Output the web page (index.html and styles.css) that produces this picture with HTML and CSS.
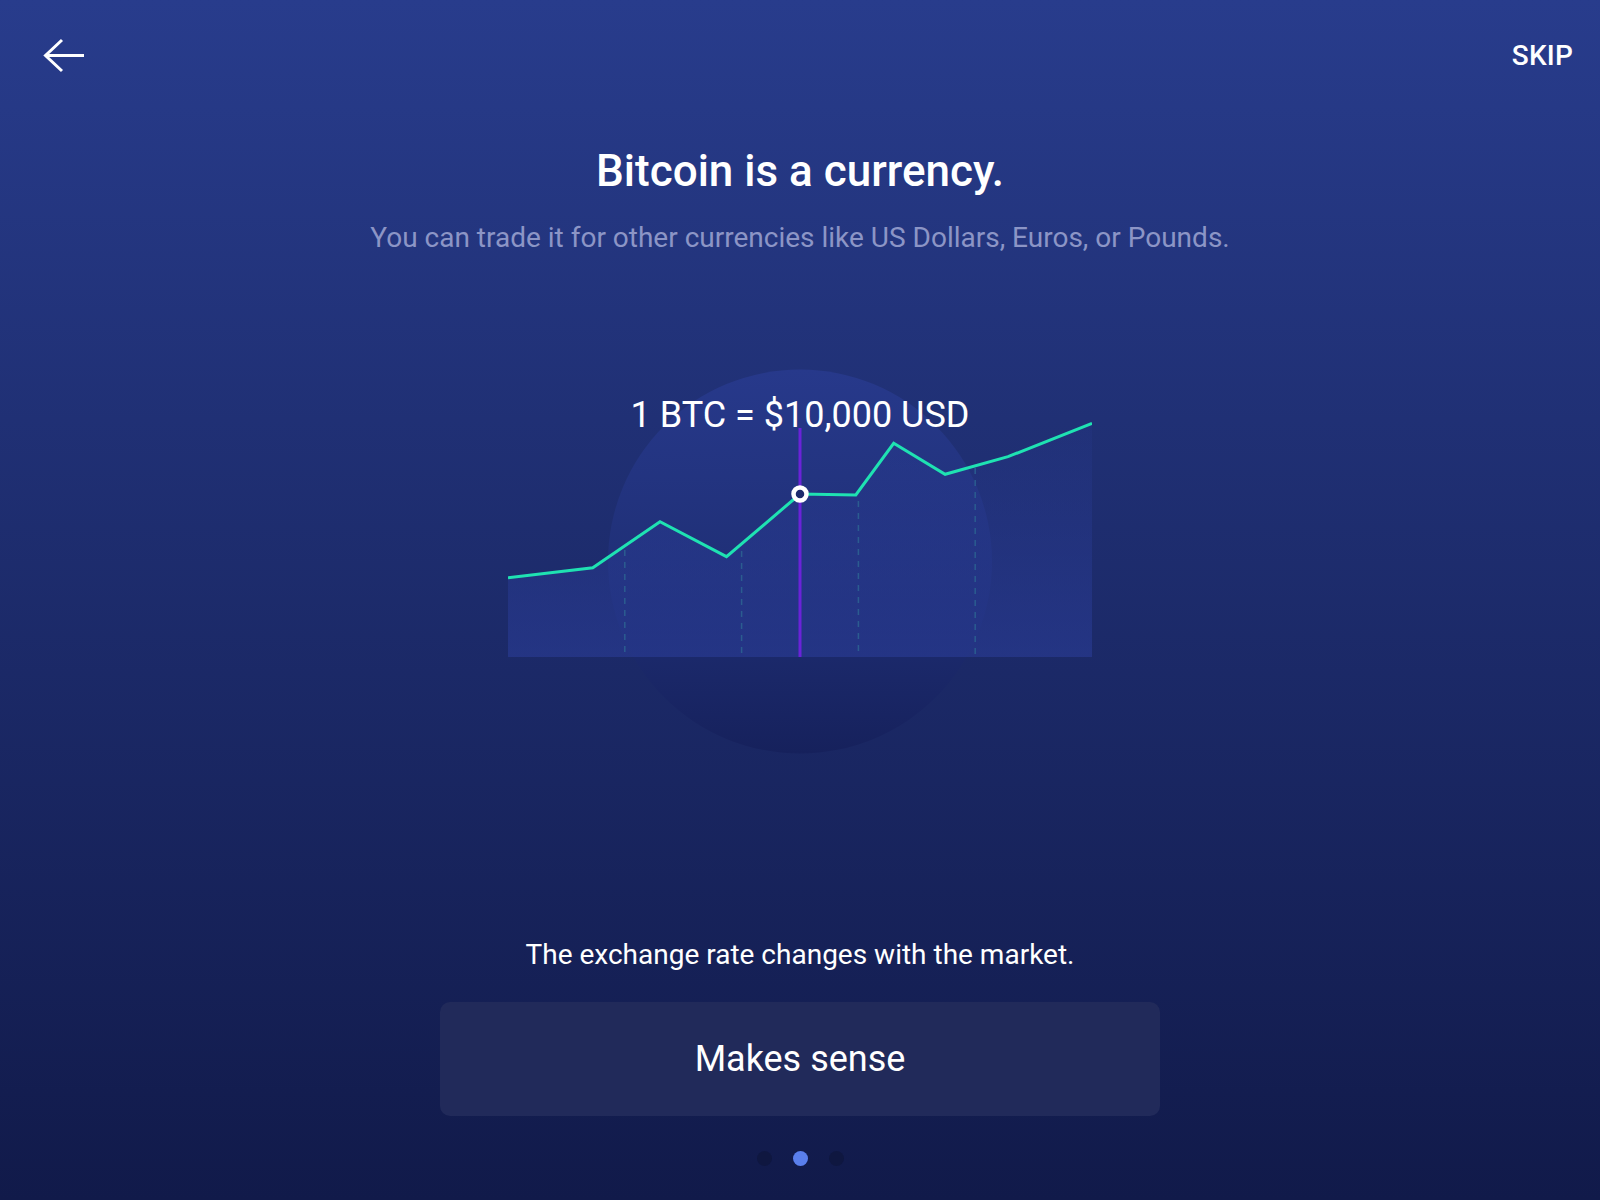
FILE: index.html
```html
<!DOCTYPE html>
<html lang="en">
<head>
<meta charset="utf-8">
<title>Bitcoin is a currency</title>
<link rel="stylesheet" href="styles.css">
</head>
<body>
<div class="screen">
  <header class="topbar">
    <button class="back" aria-label="Back">
      <svg width="44" height="36" viewBox="0 0 44 36" fill="none" stroke="#fff" stroke-width="3" stroke-linejoin="miter" stroke-linecap="butt">
        <path d="M3.5 17.5 H42"/>
        <path d="M20 2 L3.5 17.5 L20 33"/>
      </svg>
    </button>
    <span class="skip">SKIP</span>
  </header>

  <h1 class="title">Bitcoin is a currency.</h1>
  <p class="subtitle">You can trade it for other currencies like US Dollars, Euros, or Pounds.</p>

  <div class="hero">
    <svg class="chart" width="584" height="386" viewBox="0 0 584 386">
      <defs>
        <linearGradient id="circ" x1="0" y1="0" x2="0" y2="1">
          <stop offset="0" stop-color="#27398b"/>
          <stop offset="0.55" stop-color="#1f2f76"/>
          <stop offset="1" stop-color="#16215c"/>
        </linearGradient>
        <linearGradient id="area" x1="0" y1="0" x2="0" y2="1">
          <stop offset="0" stop-color="#2a3c96" stop-opacity="0.15"/>
          <stop offset="1" stop-color="#2a3c96" stop-opacity="0.6"/>
        </linearGradient>
      </defs>
      <circle cx="292" cy="192.5" r="192" fill="url(#circ)"/>
      <path d="M0 208.7 L84.8 198.7 L152 152.7 L218.5 187.7 L292 125 L347.8 126 L385.7 74.3 L437.1 105.3 L500 87.7 L584 54.3 L584 288 L0 288 Z" fill="url(#area)"/>
      <g stroke="#2b5c90" stroke-width="1.5" stroke-dasharray="6 6">
        <line x1="116.8" y1="181" x2="116.8" y2="288"/>
        <line x1="233.6" y1="182" x2="233.6" y2="288"/>
        <line x1="350.4" y1="132" x2="350.4" y2="288"/>
        <line x1="467.2" y1="99" x2="467.2" y2="288"/>
      </g>
      <line x1="292" y1="59" x2="292" y2="288" stroke="#6a23d8" stroke-width="3"/>
      <polyline points="0,208.7 84.8,198.7 152,152.7 218.5,187.7 292,125 347.8,126 385.7,74.3 437.1,105.3 500,87.7 584,54.3" fill="none" stroke="#1fe2b2" stroke-width="3" stroke-linejoin="miter"/>
      <circle cx="292" cy="125" r="6.5" fill="#1d2a6c" stroke="#fff" stroke-width="4.5"/>
    </svg>
    <div class="rate">1 BTC = $10,000 USD</div>
  </div>

  <p class="note">The exchange rate changes with the market.</p>

  <button class="cta">Makes sense</button>

  <div class="dots">
    <span class="dot"></span>
    <span class="dot active"></span>
    <span class="dot"></span>
  </div>
</div>
</body>
</html>
```

FILE: styles.css
```css
* { box-sizing: border-box; }

html, body {
  margin: 0;
  padding: 0;
}

body {
  font-family: Roboto, "Noto Sans", "Liberation Sans", sans-serif;
  color: #fff;
  background: #111a4a;
}

.screen {
  width: 1600px;
  height: 1200px;
  display: flex;
  flex-direction: column;
  align-items: center;
  background: linear-gradient(180deg, #283c8c 0%, #111a4a 100%);
  overflow: hidden;
}

.topbar {
  width: 100%;
  height: 112px;
  display: flex;
  align-items: center;
  justify-content: space-between;
  padding: 0 27px 0 42px;
}

.back {
  background: none;
  border: 0;
  padding: 0;
  margin: 0;
  display: block;
  cursor: pointer;
}

.back svg { display: block; }

.skip {
  font-size: 28px;
  line-height: 32px;
  font-weight: 500;
  letter-spacing: 0.2px;
}

.title {
  margin: 33px 0 0;
  font-size: 44px;
  line-height: 52px;
  font-weight: 500;
  text-align: center;
}

.subtitle {
  margin: 25px 0 0;
  font-size: 28px;
  line-height: 32px;
  color: #8c95c6;
  text-align: center;
}

.hero {
  position: relative;
  width: 584px;
  height: 386px;
  margin-top: 115px;
}

.chart { display: block; }

.rate {
  position: absolute;
  top: 25px;
  left: -40px;
  right: -40px;
  text-align: center;
  font-size: 36px;
  line-height: 42px;
}

.note {
  margin: 184px 0 0;
  font-size: 28px;
  line-height: 32px;
  text-align: center;
}

.cta {
  margin-top: 31px;
  width: 720px;
  height: 114px;
  border: 0;
  border-radius: 10px;
  background: #212a5a;
  color: #fff;
  font-family: Roboto, "Noto Sans", "Liberation Sans", sans-serif;
  font-size: 36px;
  cursor: pointer;
}

.dots {
  margin-top: 35px;
  display: flex;
  gap: 21px;
}

.dot {
  width: 15px;
  height: 15px;
  border-radius: 50%;
  background: #0f1740;
}

.dot.active { background: #5a7fec; }
```
